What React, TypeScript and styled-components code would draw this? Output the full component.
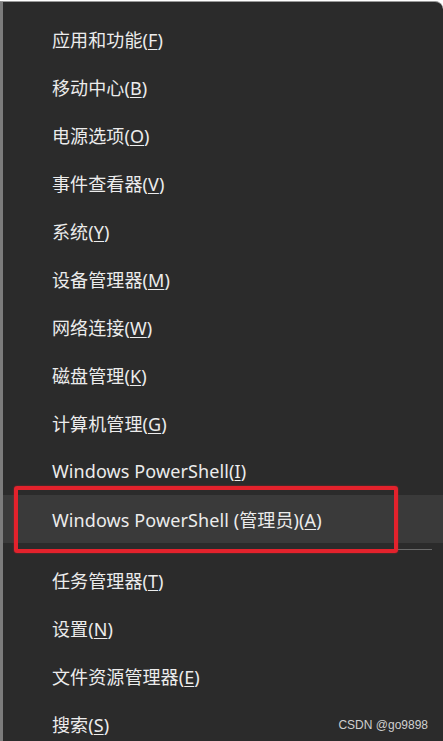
import React from "react";
import styled, { createGlobalStyle } from "styled-components";

const GlobalStyle = createGlobalStyle`
  html, body {
    margin: 0;
    padding: 0;
    background: #ffffff;
  }
  body {
    width: 443px;
    height: 741px;
    overflow: hidden;
  }
`;

const Menu = styled.div`
  box-sizing: border-box;
  margin-top: 1px;
  width: 443px;
  height: 740px;
  padding-top: 13px;
  background: #2b2b2b;
  border-top: 1px solid #9a9a9a;
  border-left: 3px solid #7c7c7c;
  border-top-right-radius: 8px;
  display: flex;
  flex-direction: column;
  position: relative;
  overflow: hidden;
  font-family: "Noto Sans", "Noto Sans CJK SC", sans-serif;
`;

const Row = styled.div<{ $active?: boolean }>`
  flex-shrink: 0;
  height: 48px;
  display: flex;
  align-items: center;
  padding-left: 49px;
  color: #ececec;
  font-size: 18px;
  letter-spacing: 0.1px;
  position: relative;
  background: ${(p) => (p.$active ? "#3a3a3a" : "transparent")};
`;

const Key = styled.span`
  text-decoration: underline;
  text-underline-offset: 2px;
  text-decoration-thickness: 1px;
`;

const Separator = styled.div`
  flex-shrink: 0;
  height: 13px;
  display: flex;
  align-items: center;
  padding: 0 11px 0 13px;

  &::after {
    content: "";
    flex: 1;
    height: 1px;
    background: #6a6a6a;
  }
`;

const RedBox = styled.div`
  position: absolute;
  top: -9px;
  bottom: -10px;
  left: 11px;
  width: 384px;
  border: 4px solid #e3222c;
  border-radius: 3px;
  box-sizing: border-box;
  box-shadow: 0 0 2px rgba(227, 34, 44, 0.6);
  z-index: 2;
`;

const Watermark = styled.div`
  position: absolute;
  right: 15px;
  bottom: 9px;
  color: #cfcfcf;
  font-family: "Liberation Sans", Arial, sans-serif;
  font-size: 12px;
`;

type Item = { label: string; key: string };

const topItems: Item[] = [
  { label: "应用和功能", key: "F" },
  { label: "移动中心", key: "B" },
  { label: "电源选项", key: "O" },
  { label: "事件查看器", key: "V" },
  { label: "系统", key: "Y" },
  { label: "设备管理器", key: "M" },
  { label: "网络连接", key: "W" },
  { label: "磁盘管理", key: "K" },
  { label: "计算机管理", key: "G" },
  { label: "Windows PowerShell", key: "I" },
];

const bottomItems: Item[] = [
  { label: "任务管理器", key: "T" },
  { label: "设置", key: "N" },
  { label: "文件资源管理器", key: "E" },
  { label: "搜索", key: "S" },
];

const MenuRow: React.FC<{ item: Item; active?: boolean; children?: React.ReactNode }> = ({
  item,
  active,
  children,
}) => (
  <Row $active={active}>
    <span>
      {item.label}(<Key>{item.key}</Key>)
    </span>
    {children}
  </Row>
);

export default function App() {
  return (
    <>
      <GlobalStyle />
      <Menu>
        {topItems.map((it) => (
          <MenuRow key={it.key} item={it} />
        ))}
        <MenuRow item={{ label: "Windows PowerShell (管理员)", key: "A" }} active>
          <RedBox />
        </MenuRow>
        <Separator />
        {bottomItems.map((it) => (
          <MenuRow key={it.key} item={it} />
        ))}
        <Watermark>CSDN @go9898</Watermark>
      </Menu>
    </>
  );
}
